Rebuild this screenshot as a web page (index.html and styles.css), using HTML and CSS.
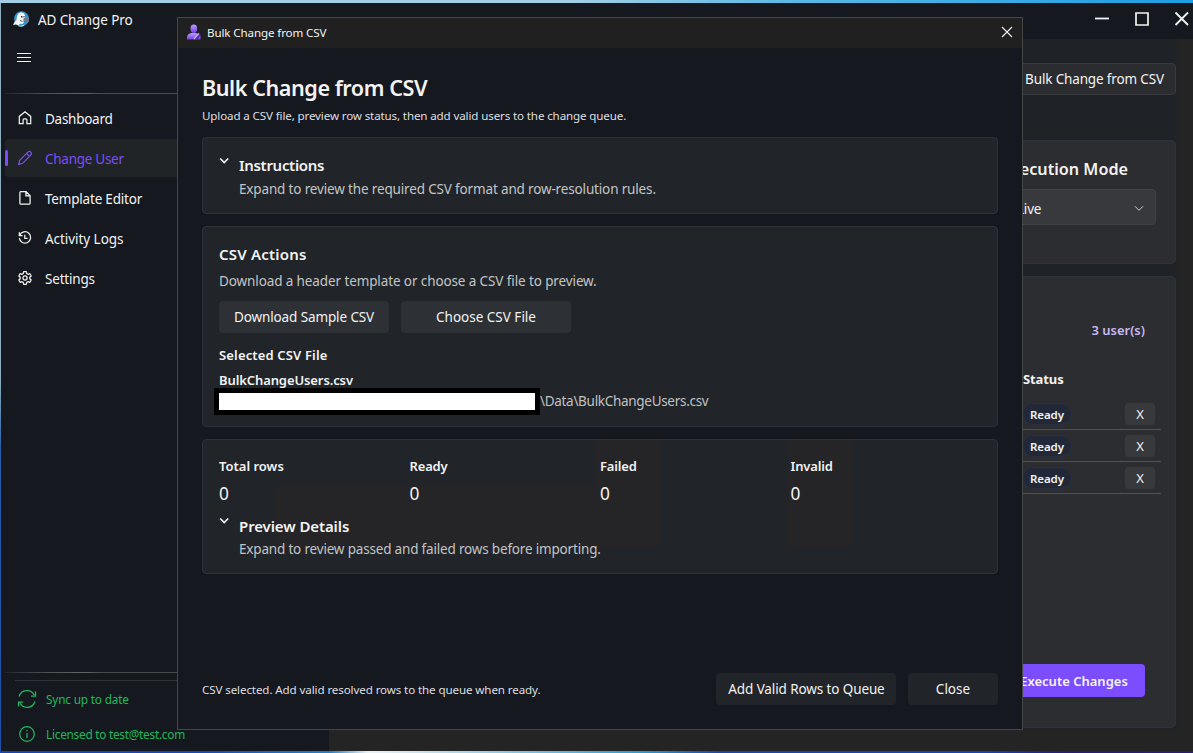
FILE: index.html
```html
<!DOCTYPE html>
<html lang="en">
<head>
<meta charset="utf-8">
<title>AD Change Pro</title>
<link rel="stylesheet" href="styles.css">
</head>
<body>
<div class="desktop">
  <div class="window">
    <header class="titlebar">
      <svg class="app-logo" width="17" height="17" viewBox="0 0 17 17"><circle cx="8.500" cy="7.800" r="7.500" fill="#3a93c8"/><path d="M0 14 1.500 11 3.500 9 4 5 5.500 2.500 8 1.300 10.500 2 12 4 12 6.500 10.500 8.500 11 11 9.500 13 7 12.800 5.500 14.500 3 13.500Z" fill="#f5f9fb"/><path d="M8 5h1.500v1.500H8zM10.500 5h1v1.500h-1z" fill="#22303d"/><path d="M10.500 7.200h5.500v3.600h-5.500z" fill="#6f7a84"/><path d="M7 9.500l2.500 1" stroke="#4b5964" fill="none"/><path d="M5.500 14.700q3 1 5.500-.5" stroke="#b5e0f2" fill="none" stroke-width="1.200"/></svg>
      <span class="app-name">AD Change Pro</span>
      <svg class="win-controls" width="100" height="20" viewBox="0 0 100 20" fill="none" stroke="#f4f4f4" stroke-width="2"><path d="M3 9.500h14" stroke-width="1.800"/><path d="M44 4h12v12H44z" stroke-width="1.700"/><path d="M83.500 3.500 96 16M96 3.500 83.500 16" stroke-width="1.800"/></svg>
    </header>
    <div class="shell">
      <aside class="sidebar">
        <svg class="burger" width="14" height="12" viewBox="0 0 14 12" stroke="#f2f2f2" stroke-width="1"><path d="M0 1.500h14M0 5.500h14M0 9.500h14"/></svg>
        <div class="divider"></div>
        <nav class="nav">
          <a class="nav-item"><svg width="16" height="16" viewBox="0 0 16 16"><path d="M2.300 13.700V6.400L8 1.800l5.700 4.600v7.300h-3.800V9.800a1 1 0 0 0-1-1H7.100a1 1 0 0 0-1 1v3.900z"/></svg><span class="w-dash">Dashboard</span></a>
          <a class="nav-item active"><svg width="16" height="16" viewBox="0 0 16 16"><path d="M1.700 14.300l1-4L10.900 2.100a1.900 1.900 0 0 1 2.900 0 1.900 1.900 0 0 1 0 2.900L5.600 13.300zM9.700 3.500l2.800 2.800" stroke-width="1.200"/></svg><span class="w-change">Change User</span></a>
          <a class="nav-item"><svg width="16" height="16" viewBox="0 0 16 16"><path d="M3.800 1.700h5.300l4 4v7.600a.9.900 0 0 1-.9.900H3.800a.9.900 0 0 1-.9-.9V2.600a.9.900 0 0 1 .9-.9zM8.900 1.900v4h4"/></svg><span class="w-tmpl">Template Editor</span></a>
          <a class="nav-item"><svg width="16" height="16" viewBox="0 0 16 16"><path d="M2.700 5.200A5.700 5.700 0 1 1 2.300 8.200M2.300 2.200v3.300h3.300M7.800 4.800v3.500h2.800"/></svg><span class="w-act">Activity Logs</span></a>
          <a class="nav-item"><svg width="16" height="16" viewBox="0 0 16 16"><path d="M6.700 1.700h2.600l.5 1.900 1.200.7 1.900-.6 1.300 2.300-1.400 1.300v1.400l1.400 1.300-1.300 2.300-1.900-.6-1.200.7-.5 1.900H6.700l-.5-1.900-1.200-.7-1.900.6L1.800 10l1.400-1.300V7.300L1.800 6l1.300-2.300 1.900.6 1.200-.7z" stroke-linejoin="round"/><circle cx="8" cy="8" r="2.100"/></svg><span class="w-set">Settings</span></a>
        </nav>
        <div class="side-foot">
          <div class="divider"></div>
          <div class="foot-line"></div>
          <div class="status sync"><svg width="20" height="20" viewBox="0 0 20 20"><path d="M2 7.500A8.300 8.300 0 0 1 17.300 6.200M18 12.500A8.300 8.300 0 0 1 2.700 13.800"/><path d="M18.500 2.500v4.500h-4.500M1.500 17.500V13H6" /></svg><span class="w-sync">Sync up to date</span></div>
          <div class="status"><svg width="20" height="20" viewBox="0 0 20 20"><circle cx="10" cy="10" r="7.300"/><path d="M10 9v5M10 6v1.300"/></svg><span class="w-lic">Licensed to test@test.com</span></div>
        </div>
      </aside>
      <main class="content">
        <div class="toolbar"><button class="tool-btn"><span class="w-tool">Bulk Change from CSV</span></button></div>
        <section class="panel mode">
          <div class="mode-box">
            <h2 class="mode-title"><span class="w-mode">Execution Mode</span></h2>
            <div class="select"><span class="w-live">Live</span><svg width="10" height="8" viewBox="0 0 10 8" fill="none" stroke="#d0d0d0"><path d="M1 1.300 5 5.300 9 1.300"/></svg></div>
          </div>
        </section>
        <section class="panel queue">
          <div class="count"><span class="w-count">3 user(s)</span></div>
          <div class="table">
            <div class="thead"><span class="w-status">Status</span></div>
            <div class="row"><span class="pill"><span class="w-pill">Ready</span></span><button class="x">X</button></div>
            <div class="row"><span class="pill"><span class="w-pill">Ready</span></span><button class="x">X</button></div>
            <div class="row"><span class="pill"><span class="w-pill">Ready</span></span><button class="x">X</button></div>
          </div>
          <button class="execute"><span class="w-exec">Execute Changes</span></button>
        </section>
      </main>
    </div>
  </div>

  <div class="dialog">
    <header class="dialog-bar">
      <svg width="16" height="17" viewBox="0 0 16 17"><defs><linearGradient id="p" x1="0" y1="0" x2="0" y2="1"><stop offset="0" stop-color="#b79cff"/><stop offset="1" stop-color="#7341e0"/></linearGradient></defs><ellipse cx="7.800" cy="4.700" rx="3.300" ry="4.200" fill="url(#p)"/><path d="M1 15.500v-2.500q.5-3.300 4.500-4h4q4.500.7 5 4v2.500z" fill="url(#p)"/><path d="M7.500 15.800l5.500-6.500 2 1.500-4 5z" fill="#5127ad"/><path d="M8 15 13 9.300" stroke="#cdb8ff" stroke-width="1.200"/></svg>
      <span class="w-dbar">Bulk Change from CSV</span>
      <svg class="dialog-x" width="12" height="12" viewBox="0 0 12 12" stroke="#f2f2f2" stroke-width="1.100"><path d="M1 1l10 10M11 1 1 11"/></svg>
    </header>
    <div class="dialog-body">
      <h1 class="title"><span class="w-h1">Bulk Change from CSV</span></h1>
      <p class="subtitle"><span class="w-sub">Upload a CSV file, preview row status, then add valid users to the change queue.</span></p>

      <section class="card instructions">
        <svg class="chev" width="12" height="8" viewBox="0 0 12 8"><path d="M1.200 1.500 5.200 5.500 9.200 1.500"/></svg>
        <div>
          <h3 class="h3"><span class="w-ins">Instructions</span></h3>
          <p class="desc"><span class="w-insd">Expand to review the required CSV format and row-resolution rules.</span></p>
        </div>
      </section>

      <section class="card actions">
        <h3 class="h3"><span class="w-csv">CSV Actions</span></h3>
        <p class="desc"><span class="w-csvd">Download a header template or choose a CSV file to preview.</span></p>
        <div class="btns"><button class="btn"><span class="w-dl">Download Sample CSV</span></button><button class="btn"><span class="w-ch">Choose CSV File</span></button></div>
        <div class="label sel"><span class="w-sel">Selected CSV File</span></div>
        <div class="label file"><span class="w-file">BulkChangeUsers.csv</span></div>
        <div class="path"><span class="redacted"></span><span class="w-path">\Data\BulkChangeUsers.csv</span></div>
      </section>

      <section class="card preview">
        <div class="stats">
          <div><div class="label"><span class="w-total">Total rows</span></div><div class="num">0</div></div>
          <div><div class="label"><span class="w-ready">Ready</span></div><div class="num">0</div></div>
          <div><div class="label"><span class="w-failed">Failed</span></div><div class="num">0</div></div>
          <div><div class="label"><span class="w-inv">Invalid</span></div><div class="num">0</div></div>
        </div>
        <div class="expander">
          <svg class="chev" width="12" height="8" viewBox="0 0 12 8"><path d="M1.200 1.500 5.200 5.500 9.200 1.500"/></svg>
          <div>
            <h3 class="h3"><span class="w-prev">Preview Details</span></h3>
            <p class="desc"><span class="w-prevd">Expand to review passed and failed rows before importing.</span></p>
          </div>
        </div>
      </section>

      <footer class="dialog-foot">
        <span class="w-foot">CSV selected. Add valid resolved rows to the queue when ready.</span>
        <button class="btn add"><span class="w-add">Add Valid Rows to Queue</span></button>
        <button class="btn close"><span class="w-close">Close</span></button>
      </footer>
    </div>
  </div>
</div>
</body>
</html>
```
FILE: styles.css
```css
* { box-sizing: border-box; }
body, h1, h2, h3, p { margin: 0; }
body {
  font-family: "Noto Sans", "Open Sans", sans-serif;
  font-size: 13.5px;
  color: #f3f3f3;
  overflow: hidden;
}
span { white-space: nowrap; }
svg { display: block; flex: none; }
button {
  font: inherit;
  color: inherit;
  padding: 0;
  border: 0;
  display: flex;
  align-items: center;
  justify-content: center;
}
.desktop {
  position: relative;
  width: 1193px;
  height: 753px;
  padding: 3px 0 2px 1px;
  background:
    linear-gradient(90deg, #a2cfe6 0, #a2cfe6 570px, #58b8e4 800px, #1e9de2 1193px) 0 0 / 100% 3px no-repeat,
    linear-gradient(90deg, #1744b4 0, #1548b8 200px, #2380c8 330px, #e8f2f6 368px, #d8e8f0 400px, #2a9bd4 640px, #1c45a8 720px, #1644b8 980px, #251b78 1060px, #2c1b70) 0 751px / 100% 2px no-repeat,
    linear-gradient(#8eafbd 0, #8eafbd 380px, #245daa 450px, #1e4fa5);
}
.window { height: 748px; background: #15181f; display: flex; flex-direction: column; }
.titlebar { height: 36px; flex: none; display: flex; align-items: center; padding: 0 1px 4px 12px; }
.app-name { margin: 2px auto 0 8px; letter-spacing: -.1px; }
.shell { flex: 1; display: flex; min-height: 0; }

.sidebar { width: 328px; display: flex; flex-direction: column; background: #15181f; }
.burger { margin: 13px 0 0 16px; }
.divider { height: 1px; margin: 29px 0 0 4px; background: linear-gradient(90deg, #24282c, #4c4e50 40px, #646464 80px, #4a4b4d 95px); }
.nav { padding: 5px 4px 0; display: flex; flex-direction: column; gap: 2px; }
.nav-item { height: 38px; display: flex; align-items: center; gap: 12px; padding: 2px 0 0 12px; border-radius: 4px; position: relative; }
.nav-item svg { margin-bottom: 3px; }
.nav-item svg, .status svg { fill: none; stroke: currentColor; stroke-width: 1.25; }
.nav-item.active { background: #212427; color: #7b4ef7; }
.nav-item.active::before { content: ""; position: absolute; left: 0; top: 11px; width: 3px; height: 16px; border-radius: 2px; background: #7c4dff; }
.w-dash, .w-change { letter-spacing: -.27px; }
.w-tmpl, .w-set { letter-spacing: -.2px; }
.w-act { letter-spacing: -.05px; }
.side-foot { margin-top: auto; height: 79px; }
.side-foot .divider { margin-top: 0; }
.foot-line { height: 1px; margin: 7px 0 0 14px; background: #303236; }
.status { height: 35px; display: flex; align-items: center; gap: 9px; padding-left: 16px; color: #20b95c; font-size: 11.8px; }
.w-sync { letter-spacing: -.17px; }
.w-lic { letter-spacing: -.25px; }

.content { flex: 1; background: linear-gradient(90deg, #1f2226 0, #1f2226 845px, #242424 850px) 0 0 / 100% 690px no-repeat #242424; padding: 24px 17px 0; display: flex; flex-direction: column; }
.toolbar { display: flex; justify-content: flex-end; }
.tool-btn { width: 166px; height: 32px; padding-left: 3px; background: #2b2c2f; border: 1px solid #38393c; border-radius: 4px; }
.w-tool { letter-spacing: -.15px; }
.panel { background: #2c2d30; border: 1px solid #2d3440; border-radius: 5px; }
.mode { height: 124px; margin-top: 45px; padding: 16px 19px 0; display: flex; justify-content: flex-end; }
.mode-box { width: 154px; }
.mode-title { font-size: 16.2px; font-weight: 600; line-height: 24px; }
.select { height: 36px; margin-top: 8px; padding: 3px 11px 0 14px; background: #38393c; border: 1px solid #414245; border-radius: 4px; display: flex; align-items: center; justify-content: space-between; }
.w-live { letter-spacing: -.2px; }
.queue { height: 452px; margin-top: 12px; padding: 42px 14px 0; display: flex; flex-direction: column; align-items: flex-end; }
.count { padding-right: 16px; line-height: 22px; font-weight: 600; font-size: 13px; color: #c7b8f2; }
.table { width: 143px; margin-top: 26px; }
.thead { height: 31px; padding-left: 5px; line-height: 24px; font-weight: 700; font-size: 13px; letter-spacing: -.1px; }
.row { height: 32px; display: flex; align-items: center; justify-content: space-between; padding: 1px 6px 0 4px; border-bottom: 1px solid #505154; }
.pill { width: 50px; height: 22px; padding-left: 7px; border-radius: 11px; background: #222838; border: 1px solid #2a303e; font-size: 11.5px; font-weight: 600; line-height: 21px; letter-spacing: -.1px; }
.x { width: 30px; height: 22px; border-radius: 4px; background: #38393b; font-size: 13px; }
.execute { width: 146px; height: 33px; margin: 170px 16px 0 0; padding-left: 4px; background: #7c4dff; border-radius: 4px; font-weight: 600; font-size: 13px; }

.dialog { position: absolute; left: 177px; top: 17px; width: 846px; height: 713px; background: #15181f; border: 1px solid #454648; display: flex; flex-direction: column; }
.dialog-bar { height: 30px; flex: none; background: #202020; display: flex; align-items: center; padding: 0 9px 2px 8px; gap: 5px; font-size: 11.6px; }
.w-dbar { letter-spacing: -.12px; }
.dialog-x { margin-left: auto; }
.dialog-body { flex: 1; padding: 24px; display: flex; flex-direction: column; }
.title { font-size: 21.6px; font-weight: 600; line-height: 32px; letter-spacing: -.45px; }
.subtitle { font-size: 11.6px; line-height: 20px; margin-top: 2px; color: #dfdfe0; letter-spacing: -.135px; }
.card { background: #212428; border: 1px solid #2c3039; border-radius: 4px; padding: 0 16px; }
.h3 { font-size: 15px; font-weight: 600; line-height: 24px; }
.w-ins { letter-spacing: -.3px; }
.w-csv { letter-spacing: .2px; }
.w-prev { letter-spacing: -.1px; }
.desc { line-height: 22px; color: #c3c4c6; }
.w-insd { letter-spacing: -.155px; }
.w-prevd { letter-spacing: -.18px; }
.w-csvd { letter-spacing: -.11px; }
.chev { fill: none; stroke: #f0f0f0; stroke-width: 1.7; }
.instructions { height: 77px; margin-top: 11px; padding-top: 15px; display: flex; gap: 8px; }
.instructions .chev { margin-top: 4px; }
.instructions .desc { margin-top: 1px; }
.actions { height: 201px; margin-top: 12px; padding-top: 15px; }
.actions .desc { margin-top: 4px; }
.btns { display: flex; gap: 12px; margin-top: 9px; }
.btn { width: 170px; height: 32px; background: #2d3034; border-radius: 4px; }
.w-dl, .w-add { letter-spacing: -.11px; }
.label { font-size: 13px; font-weight: 600; line-height: 20px; }
.sel { margin-top: 12px; }
.w-sel { letter-spacing: .15px; }
.file { margin-top: 5px; }
.w-file { letter-spacing: -.1px; }
.path { display: flex; align-items: center; height: 27px; margin: -2px 0 0 -5px; line-height: 27px; color: #c0c1c3; }
.w-path { letter-spacing: -.3px; }
.redacted { width: 326px; height: 27px; flex: none; background: #fff; border: 5px solid #000; }
.preview {
  height: 135px; margin-top: 12px; padding-top: 16px;
  background:
    linear-gradient(#252427, #252427) 73px 45px / 384px 62px no-repeat,
    linear-gradient(#252427, #252427) 393px 0 / 64px 107px no-repeat,
    linear-gradient(#252427, #252427) 585px 0 / 64px 107px no-repeat,
    #212428;
}
.stats { display: grid; grid-template-columns: repeat(4, 190.5px); }
.w-ready, .w-failed, .w-inv { letter-spacing: -.15px; }
.num { font-size: 17.3px; line-height: 24px; margin-top: 6px; }
.expander { display: flex; gap: 8px; margin-top: 8px; }
.expander .chev { margin-top: 3px; }
.dialog-foot { margin-top: auto; display: flex; align-items: center; gap: 12px; font-size: 11.6px; }
.dialog-foot > span { margin-right: auto; color: #dfdfe0; letter-spacing: -.11px; }
.dialog-foot .btn { background: #212428; font-size: 13.5px; }
.dialog-foot .add { width: 180px; padding-left: 1px; }
.dialog-foot .close { width: 90px; }
```
